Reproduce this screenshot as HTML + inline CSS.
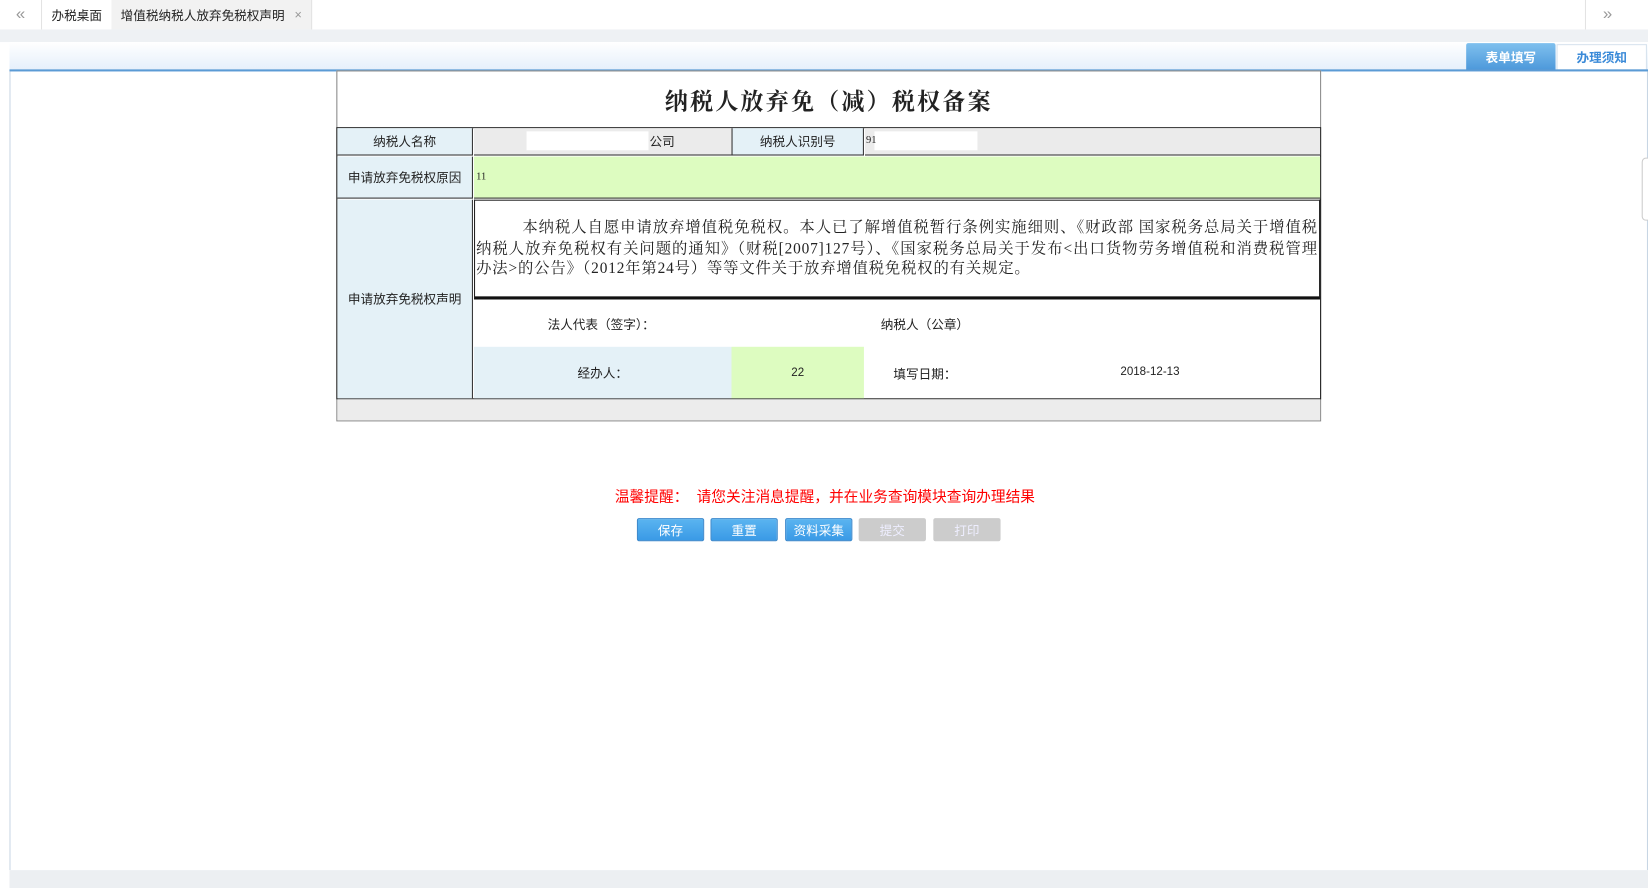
<!DOCTYPE html>
<html><head><meta charset="utf-8"><style>
html,body{margin:0;padding:0;width:1648px;height:888px;overflow:hidden;background:#fff;}
#w{position:absolute;left:0;top:0;width:1568px;height:845px;transform:scale(1.05102,1.05089);transform-origin:0 0;font-family:"Liberation Sans","Noto Sans CJK SC",sans-serif;font-size:12px;color:#222;}
.a{position:absolute;box-sizing:border-box;}
.c{display:flex;align-items:center;justify-content:center;}
.btn{position:absolute;top:493px;width:64px;height:22px;color:#fff;font-size:12px;display:flex;align-items:center;justify-content:center;border-radius:2px;box-sizing:border-box;}
.b1{background:linear-gradient(#5ab4f0,#3a9ae6);border:1px solid #3a88cc;}
.b2{background:#cccccc;color:#eef;}
</style></head><body><div id="w">
<div class="a" style="left:0;top:0;width:1568px;height:28px;background:#fff;"></div>
<div class="a" style="left:0;top:28px;width:1568px;height:12px;background:#eef1f4;"></div>
<div class="a c" style="left:0;top:0;width:40px;height:28px;border-right:1px solid #e3e3e3;color:#999;font-size:16px;">«</div>
<div class="a c" style="left:40px;top:0;width:66px;height:28px;">办税桌面</div>
<div class="a c" style="left:106px;top:0;width:191px;height:28px;background:#f2f2f2;border-right:1px solid #e3e3e3;">增值税纳税人放弃免税权声明&nbsp;<span style="color:#999;margin-left:6px">×</span></div>
<div class="a c" style="left:1508px;top:0;width:42px;height:28px;border-left:1px solid #e3e3e3;color:#999;font-size:16px;">»</div>
<div class="a" style="left:9px;top:40px;width:1559px;height:26px;background:linear-gradient(#fff,#e6f0fb);"></div>
<div class="a c" style="left:1395px;top:41px;width:85px;height:26px;background:linear-gradient(#7fc0ee,#4c98da);color:#fff;font-weight:bold;border-radius:2px 2px 0 0;">表单填写</div>
<div class="a c" style="left:1481px;top:42px;width:86px;height:25px;background:#fff;color:#3a8ad8;font-weight:bold;border:1px solid #d6e2ee;">办理须知</div>
<div class="a" style="left:9px;top:66px;width:1559px;height:2px;background:#5b9bd5;"></div>
<div class="a" style="left:9px;top:68px;width:1559px;height:760px;border-left:1px solid #c8d6e4;border-right:1px solid #c8d6e4;"></div>
<div class="a" style="left:9px;top:828px;width:1559px;height:17px;background:#eceff2;"></div>
<div class="a" style="left:1562px;top:150px;width:8px;height:60px;border:1px solid #ccc;border-radius:4px 0 0 4px;background:#fff;"></div>

<div class="a" style="left:320px;top:67px;width:937px;height:334px;border:1px solid #888;background:#fff;"></div>
<div class="a c" style="left:321px;top:70px;width:935px;height:50px;font-family:'Liberation Serif','Noto Serif CJK SC',serif;font-weight:bold;font-size:22px;letter-spacing:2px;">纳税人放弃免（减）税权备案</div>
<div class="a" style="left:320px;top:121px;width:937px;height:259px;border:1px solid #222;"></div>
<div class="a c" style="left:321px;top:122px;width:129px;height:26px;background:#e4f1f7;border-right:1px solid #333;border-bottom:1px solid #333;">纳税人名称</div>
<div class="a" style="left:451px;top:122px;width:245px;height:26px;background:#ebebeb;border-bottom:1px solid #333;"></div>
<div class="a" style="left:501px;top:125px;width:116px;height:18px;background:#fff;"></div>
<div class="a" style="left:618px;top:126px;">公司</div>
<div class="a c" style="left:696px;top:122px;width:126px;height:26px;background:#e4f1f7;border-left:1px solid #333;border-right:1px solid #333;border-bottom:1px solid #333;">纳税人识别号</div>
<div class="a" style="left:823px;top:122px;width:433px;height:26px;background:#ebebeb;border-bottom:1px solid #333;"></div>
<div class="a" style="left:832px;top:125px;width:98px;height:18px;background:#fff;"></div>
<div class="a" style="left:824px;top:128px;font-size:10px;font-family:'Liberation Serif',serif;">91</div>
<div class="a c" style="left:321px;top:149px;width:129px;height:40px;background:#e4f1f7;border-right:1px solid #333;border-bottom:1px solid #333;">申请放弃免税权原因</div>
<div class="a" style="left:451px;top:149px;width:805px;height:40px;background:#ddfcc0;border-bottom:1px solid #333;"></div>
<div class="a" style="left:453px;top:163px;font-size:10px;font-family:'Liberation Serif',serif;">11</div>
<div class="a c" style="left:321px;top:190px;width:129px;height:189px;background:#e4f1f7;border-right:1px solid #333;">申请放弃免税权声明</div>
<div class="a" style="left:451px;top:190px;width:805px;height:95px;border:1px solid #222;border-bottom:3px solid #111;padding:17px 1px 0 1px;font-family:'Liberation Serif','Noto Serif CJK SC',serif;font-size:14.6px;line-height:19.5px;letter-spacing:0.8px;text-indent:44px;text-align:justify;">本纳税人自愿申请放弃增值税免税权。本人已了解增值税暂行条例实施细则、《财政部 国家税务总局关于增值税纳税人放弃免税权有关问题的通知》（财税[2007]127号）、《国家税务总局关于发布&lt;出口货物劳务增值税和消费税管理办法&gt;的公告》（2012年第24号）等等文件关于放弃增值税免税权的有关规定。</div>
<div class="a" style="left:521px;top:300px;">法人代表（签字）：</div>
<div class="a" style="left:838px;top:300px;">纳税人（公章）</div>
<div class="a c" style="left:451px;top:330px;width:245px;height:49px;background:#e4f1f7;">经办人：</div>
<div class="a c" style="left:696px;top:330px;width:126px;height:49px;background:#ddfcc0;font-size:11px;">22</div>
<div class="a" style="left:850px;top:347px;">填写日期：</div>
<div class="a" style="left:1066px;top:348px;font-size:11px;">2018-12-13</div>
<div class="a" style="left:321px;top:380px;width:935px;height:20px;background:#ececec;"></div>

<div class="a" style="left:585px;top:462px;color:#f00;font-size:14px;">温馨提醒：&nbsp;&nbsp;请您关注消息提醒，并在业务查询模块查询办理结果</div>
<div class="btn b1" style="left:606px;">保存</div>
<div class="btn b1" style="left:676px;">重置</div>
<div class="btn b1" style="left:747px;">资料采集</div>
<div class="btn b2" style="left:817px;">提交</div>
<div class="btn b2" style="left:888px;">打印</div>
</div></body></html>
